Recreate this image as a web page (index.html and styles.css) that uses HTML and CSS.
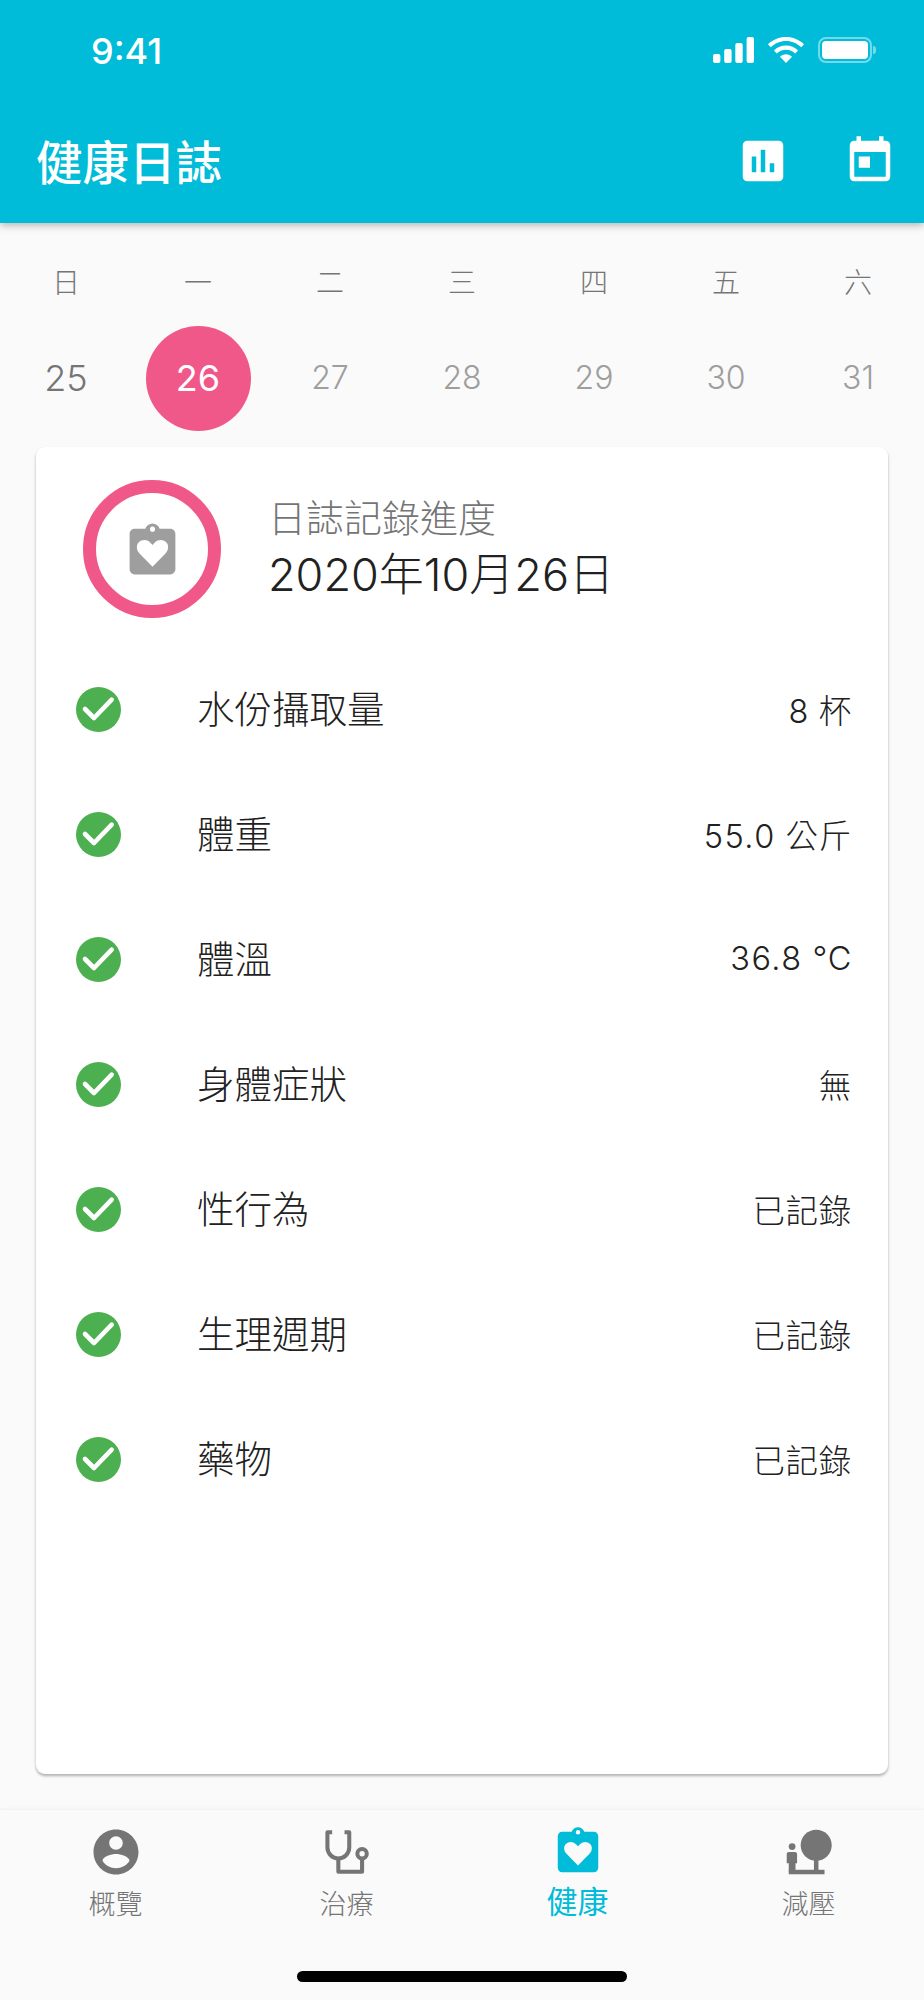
FILE: index.html
```html
<!DOCTYPE html>
<html lang="zh-Hant">
<head>
  <meta charset="UTF-8" />
  <title>健康日誌</title>
  <link rel="stylesheet" href="styles.css">
</head>
<body>
  <svg class="defs" width="0" height="0">
    <symbol id="clipboard-heart" viewBox="0 0 24 24">
      <path fill-rule="evenodd" d="M19 3h-4.180C14.400 1.840 13.300 1 12 1s-2.400.84-2.820 2H5c-1.100 0-2 .9-2 2v14c0 1.100.9 2 2 2h14c1.100 0 2-.9 2-2V5c0-1.100-.9-2-2-2zM12 2.200a1 1 0 1 1 0 2 1 1 0 0 1 0-2zM12 18 6.900 12.800C5.500 11.300 5.600 9.400 6.600 8.400c1.200-1.200 3.200-1.200 4.400 0l1 1 1-1c1.200-1.200 3.200-1.200 4.400 0 1 1 1.100 2.900-.3 4.400z"/>
    </symbol>
    <symbol id="check-dot" viewBox="0 0 45 45">
      <circle cx="22.500" cy="22.500" r="22.500" fill="#4caf50"/>
      <path d="M9 22l9 9L35.700 12.700" fill="none" stroke="#fff" stroke-width="4.600" stroke-linecap="round" stroke-linejoin="round"/>
    </symbol>
  </svg>

  <div class="app">
    <header class="top">
      <div class="status">
        <span class="time">9:41</span>
        <div class="status-icons">
          <svg width="41" height="26" viewBox="0 0 41 26" fill="#fff">
            <rect x="0" y="17" width="7.400" height="9" rx="2"/>
            <rect x="11.200" y="12" width="7.400" height="14" rx="2"/>
            <rect x="22.300" y="6" width="7.400" height="20" rx="2"/>
            <rect x="33.600" y="0" width="7.400" height="26" rx="2"/>
          </svg>
          <svg width="36" height="26" viewBox="0 0 36 26" fill="#fff">
            <path d="M18 0C11 0 4.800 2.700 0 7.200l2.700 3C6.800 6.300 12.100 3.900 18 3.900s11.200 2.400 15.300 6.300l2.700-3C31.200 2.700 25 0 18 0z"/>
            <path d="M18 8.600c-4.600 0-8.800 1.800-12 4.800l2.700 3c2.400-2.300 5.700-3.700 9.300-3.700s6.900 1.400 9.300 3.700l2.700-3c-3.200-3-7.400-4.800-12-4.800z"/>
            <path d="M18 17.300c-2.300 0-4.400.9-6 2.400l6 6.300 6-6.300c-1.600-1.500-3.700-2.400-6-2.400z"/>
          </svg>
          <div class="battery">
            <div class="battery-body"><div class="battery-level"></div></div>
            <div class="battery-nub"></div>
          </div>
        </div>
      </div>
      <div class="appbar">
        <h1>健康日誌</h1>
        <div class="appbar-actions">
          <svg class="icon-54" viewBox="0 0 24 24" fill="#fff">
            <path d="M19 3H5c-1.100 0-2 .9-2 2v14c0 1.100.9 2 2 2h14c1.100 0 2-.9 2-2V5c0-1.100-.9-2-2-2zM9 17H7v-7h2v7zm4 0h-2V7h2v10zm4 0h-2v-4h2v4z"/>
          </svg>
          <svg class="icon-54" viewBox="0 0 24 24" fill="#fff">
            <path d="M19 3h-1V1h-2v2H8V1H6v2H5c-1.110 0-1.990.9-1.990 2L3 19c0 1.100.89 2 2 2h14c1.100 0 2-.9 2-2V5c0-1.100-.9-2-2-2zm0 16H5V8h14v11zM7 10h5v5H7z"/>
          </svg>
        </div>
      </div>
    </header>

    <main class="content">
      <div class="week">
        <span>日</span><span>一</span><span>二</span><span>三</span><span>四</span><span>五</span><span>六</span>
      </div>
      <div class="dates">
        <div class="date past">25</div>
        <div class="date selected">26</div>
        <div class="date">27</div>
        <div class="date">28</div>
        <div class="date">29</div>
        <div class="date">30</div>
        <div class="date">31</div>
      </div>

      <section class="card">
        <div class="card-head">
          <div class="ring">
            <svg class="ring-icon" viewBox="0 0 24 24"><use href="#clipboard-heart"/></svg>
          </div>
          <div class="card-title">
            <div class="card-sub">日誌記錄進度</div>
            <div class="card-date">2020年10月26日</div>
          </div>
        </div>

        <div class="rows">
          <div class="row"><svg class="check"><use href="#check-dot"/></svg><span class="row-label">水份攝取量</span><span class="row-value">8 杯</span></div>
          <div class="row"><svg class="check"><use href="#check-dot"/></svg><span class="row-label">體重</span><span class="row-value"><span class="num">55.0</span> 公斤</span></div>
          <div class="row"><svg class="check"><use href="#check-dot"/></svg><span class="row-label">體溫</span><span class="row-value"><span class="num">36.8</span> °C</span></div>
          <div class="row"><svg class="check"><use href="#check-dot"/></svg><span class="row-label">身體症狀</span><span class="row-value">無</span></div>
          <div class="row"><svg class="check"><use href="#check-dot"/></svg><span class="row-label">性行為</span><span class="row-value">已記錄</span></div>
          <div class="row"><svg class="check"><use href="#check-dot"/></svg><span class="row-label">生理週期</span><span class="row-value">已記錄</span></div>
          <div class="row"><svg class="check"><use href="#check-dot"/></svg><span class="row-label">藥物</span><span class="row-value">已記錄</span></div>
        </div>
      </section>
    </main>

    <footer class="bottom">
      <nav class="tabs">
        <div class="tab">
          <svg class="icon-54" viewBox="0 0 24 24">
            <path d="M12 2C6.480 2 2 6.480 2 12s4.480 10 10 10 10-4.480 10-10S17.520 2 12 2zm0 3c1.660 0 3 1.340 3 3s-1.340 3-3 3-3-1.340-3-3 1.340-3 3-3zm0 14.200c-2.500 0-4.710-1.280-6-3.220.03-1.990 4-3.080 6-3.080 1.990 0 5.970 1.090 6 3.080-1.290 1.940-3.500 3.220-6 3.220z"/>
          </svg>
          <span class="tab-label">概覽</span>
        </div>
        <div class="tab">
          <svg class="icon-54" viewBox="0 0 24 24">
            <g fill="none" stroke-width="1.800" stroke-linejoin="round">
              <path d="M5.400 3.200H3.300V10a4.850 4.850 0 0 0 9.700 0V3.200h-2.100"/>
              <path d="M8.150 14.800v6h10.550V15.500"/>
              <circle cx="18.700" cy="12.800" r="2.100"/>
            </g>
          </svg>
          <span class="tab-label">治療</span>
        </div>
        <div class="tab active">
          <svg class="icon-54" viewBox="0 0 24 24"><use href="#clipboard-heart"/></svg>
          <span class="tab-label">健康</span>
        </div>
        <div class="tab">
          <svg class="icon-54" viewBox="0 0 24 24">
            <circle cx="15.200" cy="9" r="6.900"/>
            <rect x="14.200" y="14" width="2" height="7"/>
            <rect x="3" y="19.900" width="15.900" height="2"/>
            <circle cx="4.500" cy="9.600" r="1.500"/>
            <path d="M2.100 13c0-.6.4-1 1-1h2.600c.6 0 1 .4 1 1v4H6v3.500H3V17h-.9z"/>
          </svg>
          <span class="tab-label">減壓</span>
        </div>
      </nav>
      <div class="home-bar"></div>
    </footer>
  </div>
</body>
</html>
```

FILE: styles.css
```css
* {
  box-sizing: border-box;
}

body {
  margin: 0;
  background-color: #fafafa;
  font-family: Inter, "Noto Sans CJK TC", sans-serif;
  color: #212121;
}

.defs {
  display: block;
  height: 0;
}

.app {
  height: 2000px;
  display: flex;
  flex-direction: column;
}

.icon-54 {
  width: 54px;
  height: 54px;
  display: block;
}

/* top bar */
.top {
  position: relative;
  background-color: #00bcd8;
  box-shadow: 0 2px 8px rgba(0,0,0,0.3);
  color: #fff;
}

.status {
  height: 88px;
  padding: 37px 48px 0 91px;
  display: flex;
  justify-content: space-between;
  align-items: flex-start;
}

.time {
  margin-top: 1px;
  font-size: 36px;
  font-weight: 500;
  line-height: 26px;
}

.status-icons {
  display: flex;
  align-items: flex-start;
  gap: 14px;
}

.battery {
  display: flex;
  align-items: center;
  gap: 1px;
}

.battery-body {
  width: 54px;
  height: 26px;
  padding: 2px;
  border: 2px solid rgba(255,255,255,0.45);
  border-radius: 8px;
}

.battery-level {
  height: 100%;
  background: #fff;
  border-radius: 4px;
}

.battery-nub {
  width: 3px;
  height: 8px;
  background: rgba(255,255,255,0.45);
  border-radius: 0 3px 3px 0;
}

.appbar {
  height: 135px;
  padding: 10px 27px 0 36px;
  display: flex;
  justify-content: space-between;
  align-items: center;
}

.appbar h1 {
  margin: 5px 0 0;
  font-size: 46.500px;
  font-weight: 500;
  line-height: 60px;
}

.appbar-actions {
  display: flex;
  gap: 53px;
}

/* calendar strip */
.content {
  flex: 1;
  display: flex;
  flex-direction: column;
  min-height: 0;
}

.week,
.dates {
  display: grid;
  grid-template-columns: repeat(7, 1fr);
  justify-items: center;
}

.week {
  margin-top: 41px;
  font-size: 28px;
  line-height: 38px;
  color: #757575;
  font-weight: 300;
}

.dates {
  margin-top: 24px;
}

.date {
  width: 105px;
  height: 105px;
  padding-bottom: 2px;
  border-radius: 50%;
  display: flex;
  align-items: center;
  justify-content: center;
  font-size: 32px;
  font-weight: 300;
  color: #9e9e9e;
}

.date.past {
  font-size: 36px;
  color: #757575;
}

.date.selected {
  font-size: 36px;
  font-weight: 400;
  color: #fff;
  background-color: #f1588a;
}

/* daily log card */
.card {
  flex: 1;
  margin: 16px 36px 36px;
  padding-top: 33px;
  background: #fff;
  border-radius: 9px;
  box-shadow: 0 2px 3px rgba(0,0,0,0.3);
}

.card-head {
  display: flex;
  align-items: center;
  gap: 47px;
  padding-left: 47px;
}

.ring {
  width: 138px;
  height: 138px;
  border: 13px solid #f1588a;
  border-radius: 50%;
  display: flex;
  align-items: center;
  justify-content: center;
}

.ring-icon {
  width: 61px;
  height: 61px;
  margin-top: 5px;
  fill: #9e9e9e;
}

.card-sub {
  font-size: 38px;
  line-height: 50px;
  font-weight: 300;
  color: #757575;
}

.card-date {
  margin-top: 2px;
  font-size: 45px;
  font-weight: 300;
  line-height: 60px;
}

.rows {
  margin-top: 29px;
}

.row {
  height: 125px;
  padding: 0 36px 0 40px;
  display: flex;
  align-items: center;
}

.check {
  width: 45px;
  height: 45px;
  margin-right: 76px;
}

.row-label {
  flex: 1;
  padding-bottom: 6px;
  font-size: 37.500px;
  font-weight: 300;
}

.row-value {
  padding-bottom: 3px;
  font-size: 32.500px;
  font-weight: 300;
  letter-spacing: 0.7px;
}

.num {
  letter-spacing: 1.500px;
}

/* bottom tabs */
.bottom {
  height: 190px;
  display: flex;
  flex-direction: column;
  box-shadow: 0 -1px 3px rgba(0,0,0,0.05);
}

.tabs {
  display: grid;
  grid-template-columns: repeat(4, 1fr);
  padding-top: 15px;
}

.tab {
  display: flex;
  flex-direction: column;
  align-items: center;
  height: 97px;
  color: #757575;
  fill: #757575;
  stroke: #757575;
  stroke-width: 0;
}

.tab-label {
  margin-top: auto;
  font-size: 27px;
  line-height: 34px;
  font-weight: 300;
}

.tab.active {
  color: #00bcd8;
  fill: #00bcd8;
  stroke: none;
}

.tab.active .tab-label {
  padding-bottom: 3px;
  font-size: 31px;
  font-weight: 400;
}

.home-bar {
  width: 330px;
  height: 11px;
  margin: auto auto 18px;
  background: #000;
  border-radius: 6px;
}
```
